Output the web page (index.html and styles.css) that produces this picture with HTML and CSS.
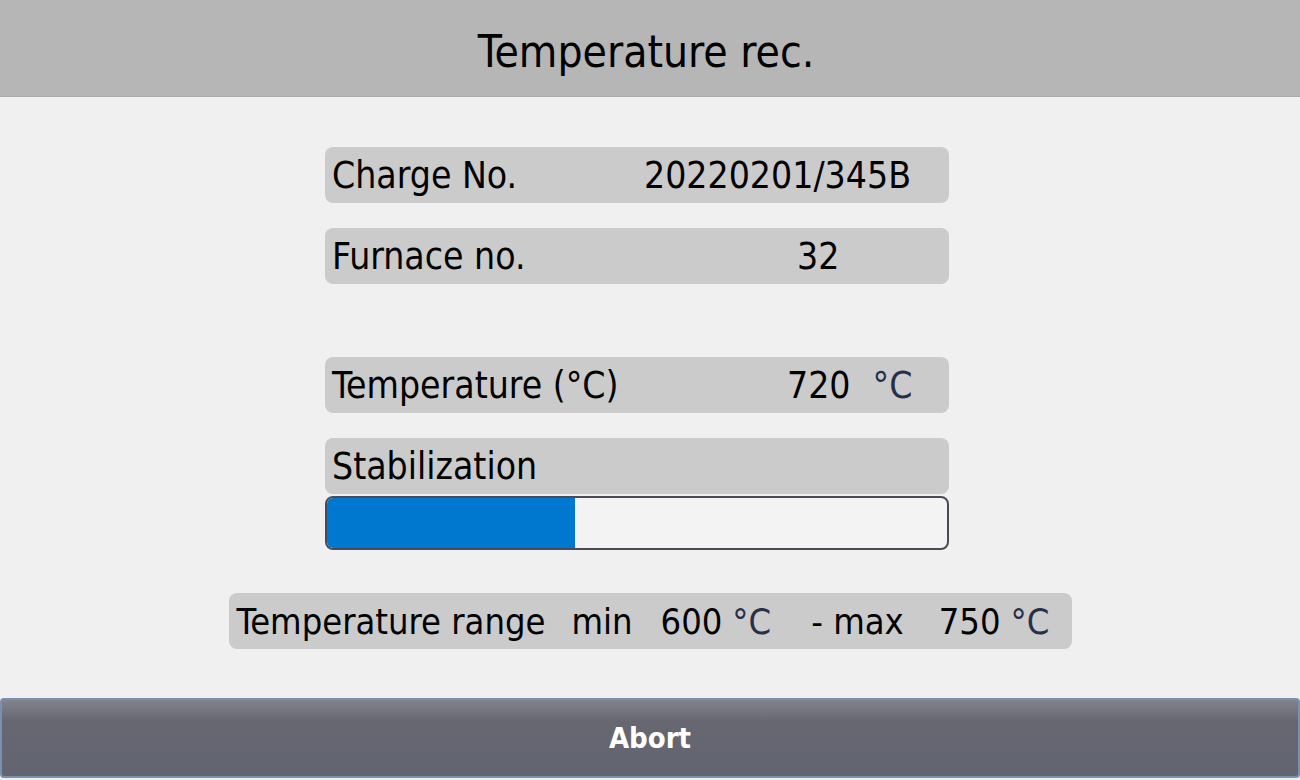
FILE: index.html
```html
<!DOCTYPE html>
<html lang="en">
<head>
    <meta charset="UTF-8">
    <meta name="viewport" content="width=device-width, initial-scale=1.0">
    <title>Temperature rec.</title>
    <link rel="stylesheet" href="styles.css">
</head>
<body>
    <header class="title-bar">
        <h1>Temperature rec.</h1>
    </header>

    <main class="content">
        <section class="field charge">
            <span class="label">Charge No.</span>
            <span class="value">20220201/345B</span>
        </section>

        <section class="field furnace">
            <span class="label">Furnace no.</span>
            <span class="value">32</span>
        </section>

        <section class="field temp">
            <span class="label">Temperature (°C)</span>
            <span class="value">720</span>
            <span class="unit">°C</span>
        </section>

        <section class="field stab">
            <span class="label">Stabilization</span>
        </section>
        <div class="progress">
            <div class="progress-fill" style="width: 40%"></div>
        </div>

        <section class="range">
            <span class="r-label">Temperature range</span>
            <span class="r-min">min</span>
            <span class="r-val">600</span>
            <span class="unit r-unit">°C</span>
            <span class="r-max">- max</span>
            <span class="r-val r-val2">750</span>
            <span class="unit r-unit">°C</span>
        </section>
    </main>

    <button class="abort">Abort</button>
</body>
</html>
```

FILE: styles.css
```css
* {
    box-sizing: border-box;
}

body {
    margin: 0;
    width: 1300px;
    height: 780px;
    overflow: hidden;
    background: #f0f0f0;
    font-family: "DejaVu Sans", sans-serif;
    font-stretch: condensed;
    color: #000;
}

.title-bar {
    height: 97px;
    background: #b6b6b6;
    border-bottom: 1px solid #a9a9a9;
    display: flex;
    align-items: center;
    justify-content: center;
}

.title-bar h1 {
    margin: 0;
    font-size: 44px;
    font-weight: normal;
    position: relative;
    top: 3px;
    left: -4px;
}

.content {
    display: flex;
    flex-direction: column;
    align-items: center;
    padding-top: 50px;
    height: 601px;
}

.field {
    width: 624px;
    height: 56px;
    margin-right: 26px;
    background: #cbcbcb;
    border-radius: 8px;
    display: flex;
    align-items: center;
    padding-left: 7px;
    font-size: 37px;
    flex-shrink: 0;
}

.field .label {
    width: 312px;
    flex-shrink: 0;
}

.furnace,
.stab {
    margin-top: 25px;
}

.temp {
    margin-top: 73px;
}

.furnace .value {
    padding-left: 153px;
}

.temp .value {
    padding-left: 143px;
}

.unit {
    color: #26304a;
}

.temp .unit {
    margin-left: 22px;
}

.progress {
    width: 624px;
    height: 54px;
    margin-top: 2px;
    margin-right: 26px;
    border: 2px solid #4b4b57;
    border-radius: 8px;
    background: #f3f3f3;
    overflow: hidden;
    flex-shrink: 0;
}

.progress-fill {
    height: 100%;
    background: #0078cf;
}

.range {
    margin-top: 43px;
    width: 843px;
    height: 56px;
    background: #cbcbcb;
    border-radius: 8px;
    display: flex;
    align-items: center;
    padding-left: 8px;
    font-size: 36px;
    flex-shrink: 0;
    white-space: nowrap;
}

.r-min {
    margin-left: 26px;
}

.r-val {
    margin-left: 28px;
}

.r-unit {
    margin-left: 10px;
}

.r-max {
    margin-left: 40px;
}

.r-val2 {
    margin-left: 35px;
}

.abort {
    display: block;
    width: 1300px;
    height: 80px;
    margin: 0;
    border: 2px solid #7b8fb3;
    border-radius: 4px;
    background: linear-gradient(180deg, #83838b 0%, #666771 28%, #62646f 100%);
    color: #fff;
    font-family: "DejaVu Sans", sans-serif;
    font-stretch: condensed;
    font-weight: bold;
    font-size: 29px;
    padding: 0;
}
```
